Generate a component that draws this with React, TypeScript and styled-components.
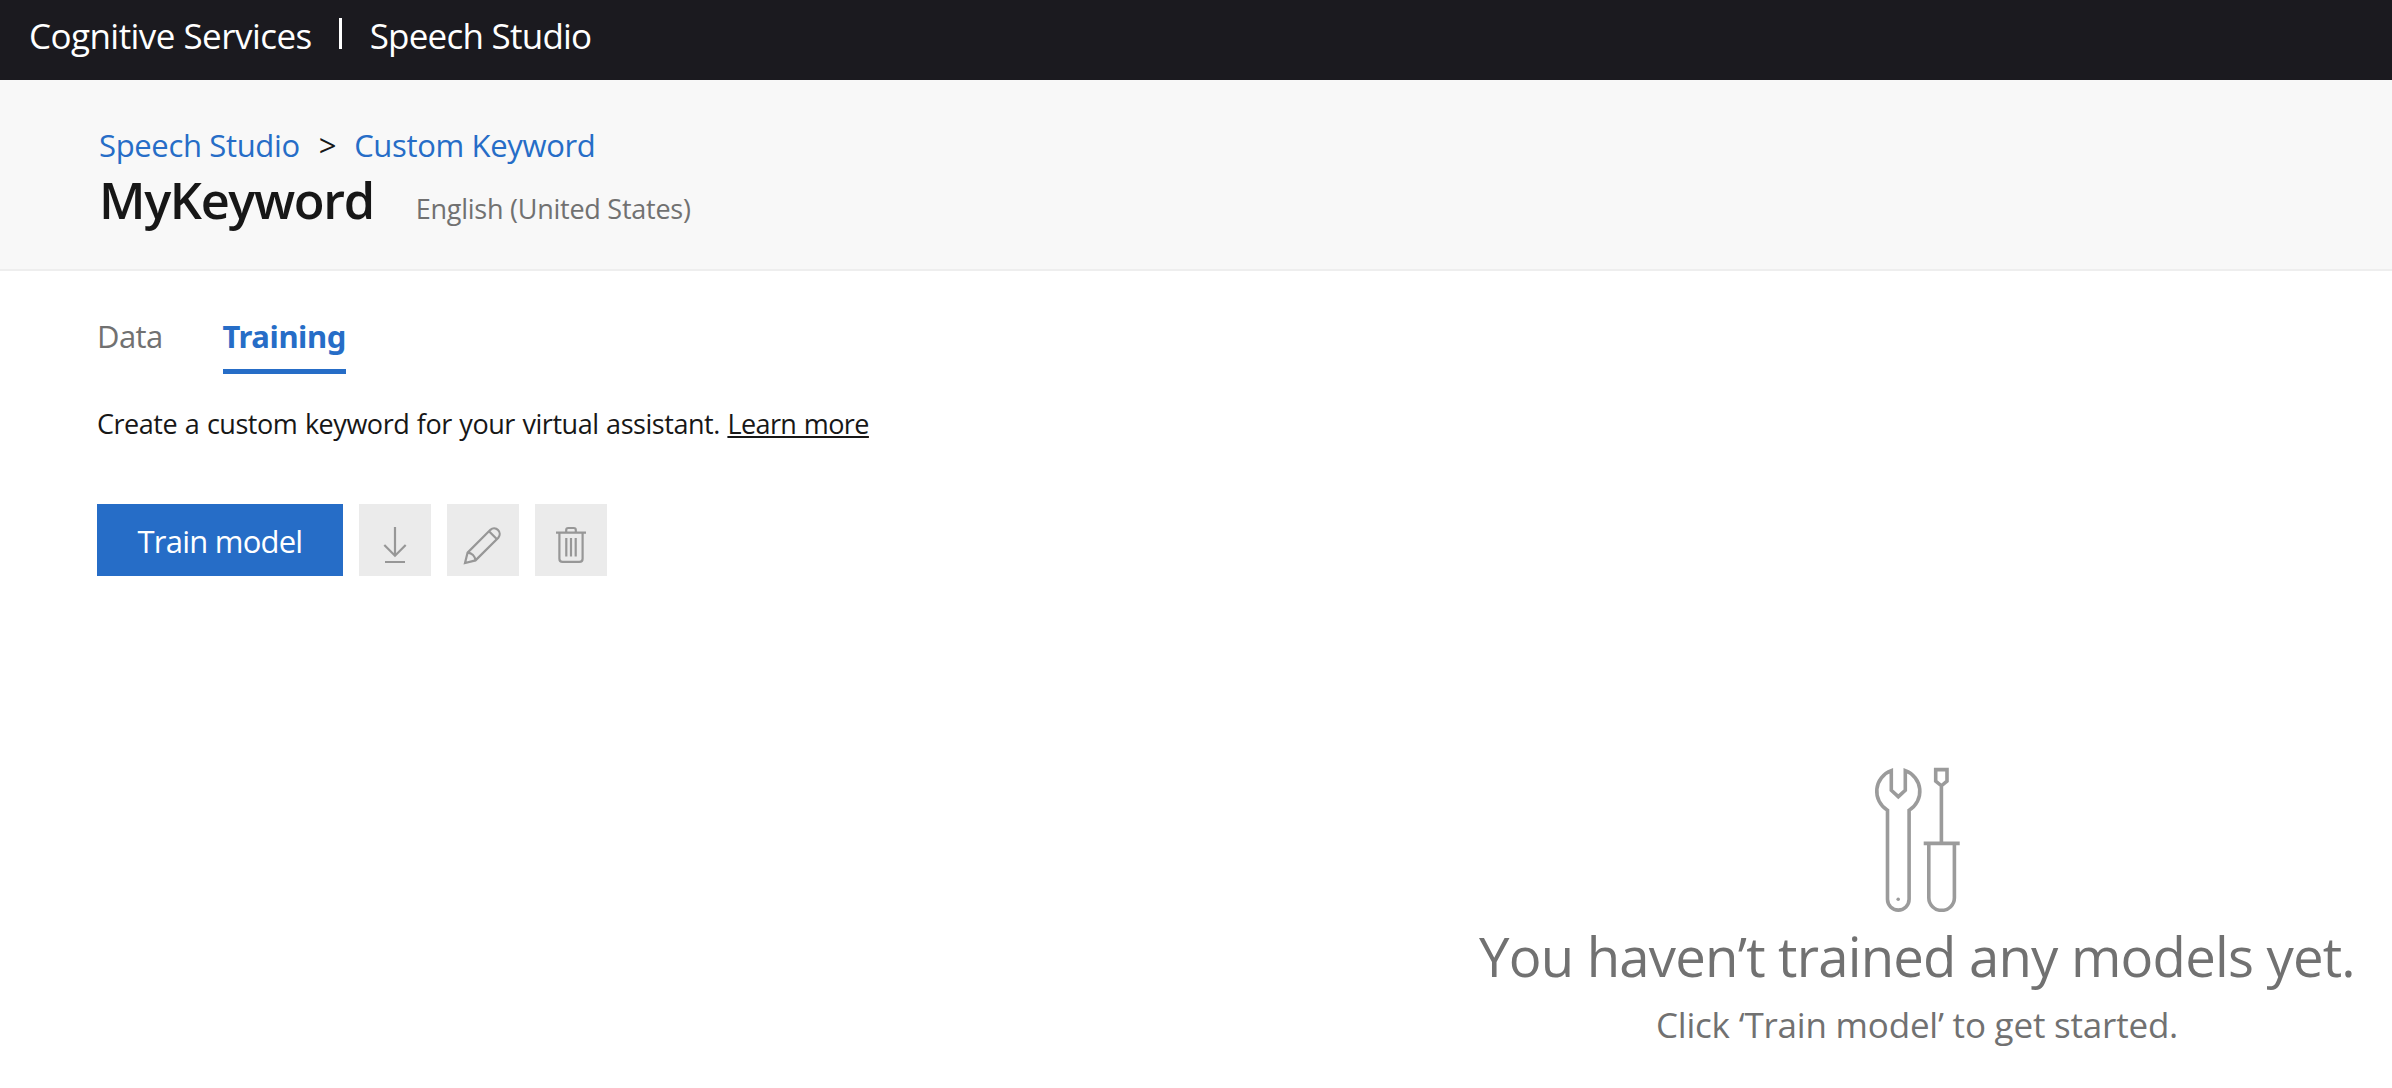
import React from 'react';
import styled, { createGlobalStyle } from 'styled-components';

const GlobalStyle = createGlobalStyle`
  * { box-sizing: border-box; }
  body {
    margin: 0;
    background: #fff;
    color: #171717;
    font-family: 'Segoe UI', 'Open Sans', 'Noto Sans', sans-serif;
  }
`;

const Page = styled.div`
  display: flex;
  flex-direction: column;
  min-height: 1088px;
  white-space: nowrap;
`;

const TopBar = styled.header`
  display: flex;
  align-items: center;
  height: 80px;
  padding: 0 29px 9px;
  background: #1b1a1f;
  color: #fff;
  font-size: 35px;
  line-height: 71px;
`;

const Brand = styled.span<{ $spacing: number }>`
  letter-spacing: ${(p) => p.$spacing}px;
`;

const Divider = styled.span`
  width: 3px;
  height: 31px;
  margin: 0 28px 4px 27px;
  background: #fff;
`;

const PageHeader = styled.section`
  height: 191px;
  padding: 44px 99px 0;
  background: #f8f8f8;
  border-bottom: 2px solid #eee;
`;

const Breadcrumb = styled.nav`
  display: flex;
  font-size: 31px;
  line-height: 42px;
  letter-spacing: -0.34px;
`;

const Crumb = styled.a`
  color: #266dc7;
`;

const Chevron = styled.span`
  margin: 0 18px 0 19px;
`;

const TitleRow = styled.div`
  display: flex;
  align-items: baseline;
  gap: 42px;
`;

const Title = styled.h1`
  margin: 0;
  font-size: 50.5px;
  font-weight: 600;
  line-height: 67px;
  letter-spacing: -1.38px;
`;

const Locale = styled.span`
  color: #717171;
  font-size: 27px;
  letter-spacing: -0.25px;
`;

const Main = styled.main`
  display: flex;
  flex-direction: column;
  padding: 44px 0 0 97px;
`;

const Tabs = styled.div`
  display: flex;
  gap: 60px;
`;

const Tab = styled.span<{ $active?: boolean }>`
  padding-bottom: 12px;
  border-bottom: 5px solid ${(p) => (p.$active ? '#266dc7' : 'transparent')};
  color: ${(p) => (p.$active ? '#266dc7' : '#717171')};
  font-family: ${(p) => (p.$active ? "'Noto Sans'" : "'Open Sans'")}, sans-serif;
  font-size: 31px;
  font-weight: ${(p) => (p.$active ? 700 : 400)};
  line-height: 42px;
  letter-spacing: ${(p) => (p.$active ? -0.41 : -0.6)}px;
`;

const Description = styled.p`
  margin: 32px 0 0;
  font-size: 27px;
  line-height: 35px;
  letter-spacing: -0.46px;
  word-spacing: 1px;
`;

const LearnMore = styled.a`
  letter-spacing: -0.58px;
  text-decoration: underline;
  text-decoration-thickness: 2px;
  text-underline-offset: 2px;
`;

const Toolbar = styled.div`
  display: flex;
  gap: 16px;
  margin-top: 63px;
`;

const PrimaryButton = styled.button`
  width: 246px;
  height: 72px;
  padding: 2px 0 0;
  border: 0;
  background: #266dc7;
  color: #fff;
  font-family: inherit;
  font-size: 31px;
  letter-spacing: -0.78px;
`;

const IconButton = styled.button`
  display: flex;
  width: 72px;
  height: 72px;
  padding: 0;
  border: 0;
  background: #ebebeb;
`;

const Glyph = styled.svg`
  fill: none;
  stroke: #979797;
  stroke-width: 2.2;
`;

const EmptyState = styled.section`
  display: flex;
  flex-direction: column;
  align-items: center;
  align-self: flex-end;
  width: 950px;
  margin-top: 191px;
  color: #717171;
`;

const ToolsArt = styled.svg`
  fill: none;
  stroke: #9b9b9b;
  stroke-width: 3.6;
`;

const EmptyTitle = styled.h2`
  margin: 7px 0 0;
  font-size: 54.5px;
  font-weight: 400;
  line-height: 74px;
  letter-spacing: -0.8px;
`;

const EmptyHint = styled.p`
  margin: 8px 0 0;
  font-size: 35px;
  line-height: 48px;
  letter-spacing: -0.2px;
`;

const DownloadIcon = () => (
  <Glyph width="72" height="72" viewBox="0 0 72 72">
    <path d="M36 23V51.5M25.3 41L36 51.7L46.7 41M26 58H46" />
  </Glyph>
);

const PencilIcon = () => (
  <Glyph width="72" height="72" viewBox="0 0 72 72">
    <path d="M18 59L20.6 48.6L43.4 25.8A5.6 5.6 0 0 1 51.3 33.7L28.5 56.4Z" />
    <path d="M20.6 48.6C24.8 49 28 52.2 28.5 56.4M42 27.2L50 35.2" />
  </Glyph>
);

const TrashIcon = () => (
  <Glyph width="72" height="72" viewBox="0 0 72 72">
    <path d="M21 28.7H51M31.2 28.5V26Q31.2 24 33.2 24H38.8Q40.8 24 40.8 26V28.5" />
    <path d="M24.4 29V54.7Q24.4 57.9 27.6 57.9H44.4Q47.6 57.9 47.6 54.7V29M31.3 34V52.5M36 34V52.5M40.7 34V52.5" />
  </Glyph>
);

const ToolsIcon = () => (
  <ToolsArt width="87" height="145" viewBox="14 17 87 145">
    <path d="M31.3 20.6A22 22 0 0 0 27.5 60.2V149.3A10.8 10.8 0 0 0 49.1 149.3V60.2A22 22 0 0 0 45.3 20.6V40.3L38.3 46.7L31.3 40.3Z" />
    <path d="M75.7 19.6H87V31.2L81.4 35.8L75.7 31.2ZM81.4 35.8V93M63.7 93.4H99.7M68.8 93.4V147.8A12.8 12.6 0 0 0 94.4 147.8V93.4" />
    <circle cx="38.2" cy="149.3" r="1.8" fill="#9b9b9b" stroke="none" />
  </ToolsArt>
);

export default function App() {
  return (
    <Page>
      <GlobalStyle />
      <TopBar>
        <Brand $spacing={-0.55}>Cognitive Services</Brand>
        <Divider />
        <Brand $spacing={-0.76}>Speech Studio</Brand>
      </TopBar>
      <PageHeader>
        <Breadcrumb>
          <Crumb>Speech Studio</Crumb>
          <Chevron>&gt;</Chevron>
          <Crumb>Custom Keyword</Crumb>
        </Breadcrumb>
        <TitleRow>
          <Title>MyKeyword</Title>
          <Locale>English (United States)</Locale>
        </TitleRow>
      </PageHeader>
      <Main>
        <Tabs>
          <Tab>Data</Tab>
          <Tab $active>Training</Tab>
        </Tabs>
        <Description>
          Create a custom keyword for your virtual assistant. <LearnMore>Learn more</LearnMore>
        </Description>
        <Toolbar>
          <PrimaryButton>Train model</PrimaryButton>
          <IconButton aria-label="Download"><DownloadIcon /></IconButton>
          <IconButton aria-label="Edit"><PencilIcon /></IconButton>
          <IconButton aria-label="Delete"><TrashIcon /></IconButton>
        </Toolbar>
        <EmptyState>
          <ToolsIcon />
          <EmptyTitle>You haven’t trained any models yet.</EmptyTitle>
          <EmptyHint>Click ‘Train model’ to get started.</EmptyHint>
        </EmptyState>
      </Main>
    </Page>
  );
}
